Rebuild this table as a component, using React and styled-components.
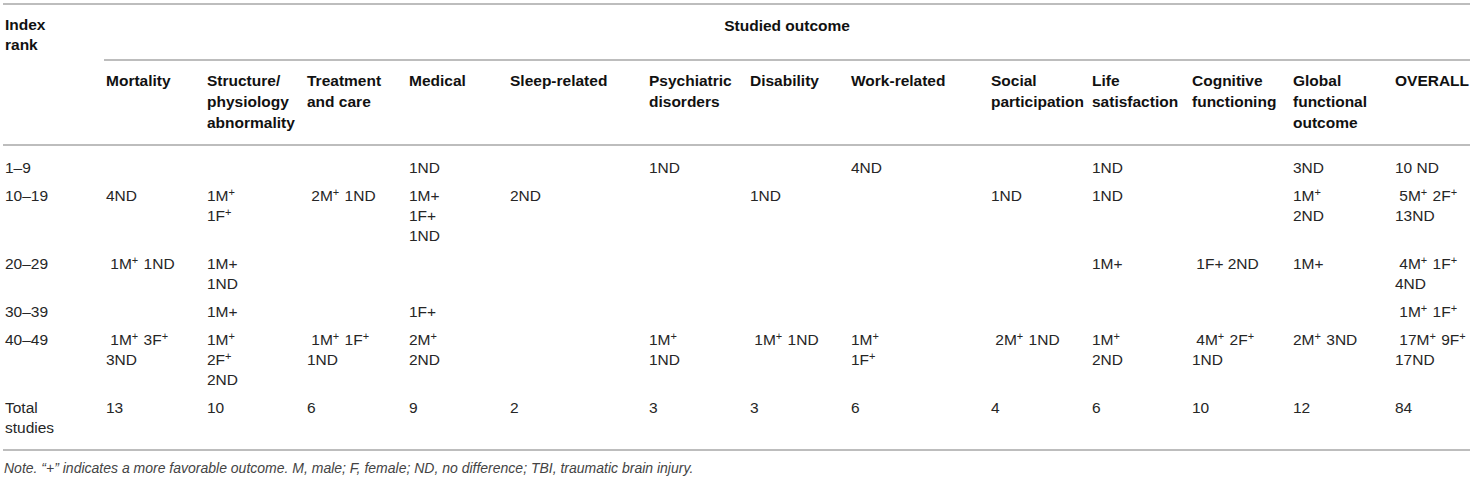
import React from 'react';
import styled, { createGlobalStyle } from 'styled-components';

const GlobalStyle = createGlobalStyle`
  body {
    margin: 0;
    background: #fff;
    font-family: "Liberation Sans", Arial, Helvetica, sans-serif;
  }
`;

const WIDTHS = [101, 101, 100, 102, 101, 139, 101, 101, 140, 101, 100, 101, 102, 77];

const OUTCOMES = [
  'Mortality',
  'Structure/ physiology abnormality',
  'Treatment and care',
  'Medical',
  'Sleep-related',
  'Psychiatric disorders',
  'Disability',
  'Work-related',
  'Social participation',
  'Life satisfaction',
  'Cognitive functioning',
  'Global functional outcome',
  'OVERALL',
];

// "^" marks a superscript plus, a leading space is an indent kept from the source
const ROWS = [
  {
    rank: '1–9',
    cells: ['', '', '', '1ND', '', '1ND', '', '4ND', '', '1ND', '', '3ND', '10 ND'],
  },
  {
    rank: '10–19',
    cells: [
      '4ND',
      ['1M^', '1F^'],
      ' 2M^ 1ND',
      ['1M+', '1F+', '1ND'],
      '2ND',
      '',
      '1ND',
      '',
      '1ND',
      '1ND',
      '',
      ['1M^', '2ND'],
      [' 5M^ 2F^', '13ND'],
    ],
  },
  {
    rank: '20–29',
    cells: [
      ' 1M^ 1ND',
      ['1M+', '1ND'],
      '',
      '',
      '',
      '',
      '',
      '',
      '',
      '1M+',
      ' 1F+ 2ND',
      '1M+',
      [' 4M^ 1F^', '4ND'],
    ],
  },
  {
    rank: '30–39',
    cells: ['', '1M+', '', '1F+', '', '', '', '', '', '', '', '', ' 1M^ 1F^'],
  },
  {
    rank: '40–49',
    cells: [
      [' 1M^ 3F^', '3ND'],
      ['1M^', '2F^', '2ND'],
      [' 1M^ 1F^', '1ND'],
      ['2M^', '2ND'],
      '',
      ['1M^', '1ND'],
      ' 1M^ 1ND',
      ['1M^', '1F^'],
      ' 2M^ 1ND',
      ['1M^', '2ND'],
      [' 4M^ 2F^', '1ND'],
      '2M^ 3ND',
      [' 17M^ 9F^', '17ND'],
    ],
  },
  {
    rank: ['Total', 'studies'],
    cells: ['13', '10', '6', '9', '2', '3', '3', '6', '4', '6', '10', '12', '84'],
  },
];

function Line({ text }) {
  const parts = text.split('^');
  return (
    <LineText>
      {parts.map((p, i) => (
        <React.Fragment key={i}>
          {p}
          {i < parts.length - 1 && <Plus>+</Plus>}
        </React.Fragment>
      ))}
    </LineText>
  );
}

function CellText({ value }) {
  const lines = Array.isArray(value) ? value : value ? [value] : [];
  return lines.map((l, i) => <Line key={i} text={l} />);
}

export default function App() {
  const last = ROWS.length - 1;
  return (
    <Page>
      <GlobalStyle />
      <Table>
        <colgroup>
          {WIDTHS.map((w, i) => (
            <col key={i} style={{ width: w }} />
          ))}
        </colgroup>
        <thead>
          <tr>
            <RankHead rowSpan={2}>
              Index
              <br />
              rank
            </RankHead>
            <GroupHead colSpan={13}>Studied outcome</GroupHead>
          </tr>
          <tr>
            {OUTCOMES.map(o => (
              <ColHead key={o}>{o}</ColHead>
            ))}
          </tr>
        </thead>
        <tbody>
          {ROWS.map((row, r) => (
            <tr key={r}>
              <Cell $first={r === 0} $last={r === last}>
                <CellText value={row.rank} />
              </Cell>
              {row.cells.map((c, i) => (
                <Cell key={i} $first={r === 0} $last={r === last}>
                  <CellText value={c} />
                </Cell>
              ))}
            </tr>
          ))}
        </tbody>
      </Table>
      <Note>
        Note. “+” indicates a more favorable outcome. M, male; F, female; ND, no difference; TBI,
        traumatic brain injury.
      </Note>
    </Page>
  );
}

const Page = styled.div`
  padding: 3px 4px 0 3px;
  width: 1467px;
`;

const Table = styled.table`
  width: 1467px;
  table-layout: fixed;
  border-collapse: collapse;
  border-top: 2px solid #bdbdbd;
  border-bottom: 2px solid #bdbdbd;
  color: #262626;
`;

const HeadCell = styled.th`
  font-size: 15.5px;
  font-weight: bold;
  color: #111;
  line-height: 21px;
  text-align: left;
  vertical-align: top;
  padding: 0 2px;
`;

const RankHead = styled(HeadCell)`
  line-height: 20px;
  padding-top: 10px;
  border-bottom: 2px solid #bdbdbd;
`;

const GroupHead = styled(HeadCell)`
  text-align: center;
  height: 56px;
  padding-top: 10px;
  padding-bottom: 0;
  box-sizing: border-box;
  border-bottom: 2px solid #bdbdbd;
`;

const ColHead = styled(HeadCell)`
  padding-top: 9px;
  padding-bottom: 11px;
  border-bottom: 2px solid #bdbdbd;
`;

const Cell = styled.td`
  font-size: 15.5px;
  line-height: 20px;
  vertical-align: top;
  text-align: left;
  padding: ${({ $first }) => ($first ? '12px' : '4px')} 2px
    ${({ $last }) => ($last ? '11px' : '4px')};
`;

const LineText = styled.div`
  white-space: pre;
`;

const Plus = styled.sup`
  font-size: 11px;
  line-height: 0;
  vertical-align: 5px;
  margin-right: 1px;
`;

const Note = styled.p`
  margin: 8px 0 0 1px;
  font-size: 14px;
  font-style: italic;
  color: #444;
  line-height: 18px;
`;
